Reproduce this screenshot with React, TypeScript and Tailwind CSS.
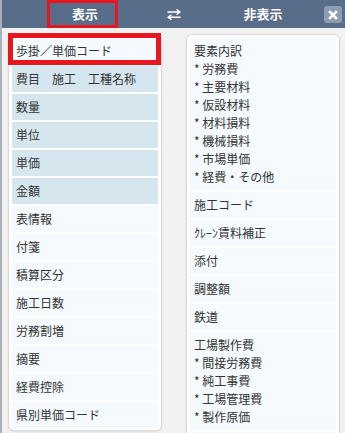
import React from "react";

const leftItems: { label: string; hi: boolean }[] = [
  { label: "費目　施工　工種名称", hi: true },
  { label: "数量", hi: true },
  { label: "単位", hi: true },
  { label: "単価", hi: true },
  { label: "金額", hi: true },
  { label: "表情報", hi: false },
  { label: "付箋", hi: false },
  { label: "積算区分", hi: false },
  { label: "施工日数", hi: false },
  { label: "労務割増", hi: false },
  { label: "摘要", hi: false },
  { label: "経費控除", hi: false },
  { label: "県別単価コード", hi: false },
];

const rightItems: string[][] = [
  ["要素内訳", "* 労務費", "* 主要材料", "* 仮設材料", "* 材料損料", "* 機械損料", "* 市場単価", "* 経費・その他"],
  ["施工コード"],
  ["ｸﾚｰﾝ賃料補正"],
  ["添付"],
  ["調整額"],
  ["鉄道"],
  ["工場製作費", "* 間接労務費", "* 純工事費", "* 工場管理費", "* 製作原価"],
  [""],
];

export default function App() {
  return (
    <div
      className="relative w-[345px] h-[433px] overflow-hidden bg-[#f1f1f1] flex flex-col text-[#333333] text-[12px]"
      style={{ fontFamily: '"Noto Sans CJK JP", "Noto Sans", sans-serif' }}
    >
      {/* left window edge */}
      <div className="absolute left-0 top-0 w-[2px] h-full bg-[#a9b1b9]" />

      {/* header */}
      <div className="h-[28px] shrink-0 bg-[#586d8a] flex items-center pl-[8px] text-white font-bold text-[13px]">
        <div className="w-[154px] flex justify-center">表示</div>
        <div className="w-[24px] flex justify-center">
          <svg width="16" height="11" viewBox="0 0 16 11" fill="none" stroke="white" strokeWidth="1.4" strokeLinecap="round" strokeLinejoin="round">
            <path d="M2 3H14M11 0.8L14 3L11 5.2" />
            <path d="M14 8.2H2M5 6L2 8.2L5 10.4" />
          </svg>
        </div>
        <div className="w-[154px] flex justify-center">非表示</div>
      </div>

      {/* close button */}
      <div className="absolute left-[324px] top-[6px] w-[18px] h-[17px] rounded-[3px] bg-[#8d9cb1] flex items-center justify-center">
        <svg width="10" height="10" viewBox="0 0 10 10" stroke="white" strokeWidth="2.6" strokeLinecap="square">
          <path d="M2 2L8 8M8 2L2 8" />
        </svg>
      </div>

      {/* header annotation */}
      <div className="absolute left-[47px] top-0 w-[71px] h-[28px] border-[3px] border-[#e8161e]" />

      {/* body */}
      <div className="flex gap-[24px] pl-[8px] pt-[6px]">
        {/* left card */}
        <div className="w-[154px] h-[397px] bg-white border border-[#d9d9d9] rounded-[6px] p-[3px] flex flex-col gap-[2px] shadow-[0_1px_2px_rgba(0,0,0,0.08)]">
          <div className="h-[26px] shrink-0 flex items-center px-[4px] bg-[#f4fafd]">歩掛／単価コード</div>
          {leftItems.map((it) => (
            <div
              key={it.label}
              className={
                "h-[26px] shrink-0 flex items-center px-[4px] whitespace-pre " +
                (it.hi ? "bg-[#d5e6ef]" : "bg-[#f4fafd]")
              }
            >
              {it.label}
            </div>
          ))}
        </div>

        {/* right card */}
        <div className="w-[154px] h-[420px] bg-white border border-[#d9d9d9] rounded-[6px] p-[3px] flex flex-col gap-[2px] shadow-[0_1px_2px_rgba(0,0,0,0.08)]">
          {rightItems.map((lines, i) =>
            lines.length === 1 ? (
              <div key={i} className="h-[26px] shrink-0 flex items-center px-[4px] bg-[#f4fafd] whitespace-pre">
                {lines[0]}
              </div>
            ) : (
              <div key={i} className="shrink-0 py-[4px] px-[4px] bg-[#f4fafd] leading-[18px]">
                {lines.map((l) => (
                  <div key={l} className="whitespace-pre">{l}</div>
                ))}
              </div>
            )
          )}
        </div>
      </div>

      {/* first item annotation */}
      <div className="absolute left-[8px] top-[33px] w-[153px] h-[32px] border-[5px] border-[#e8161e]" />
    </div>
  );
}
